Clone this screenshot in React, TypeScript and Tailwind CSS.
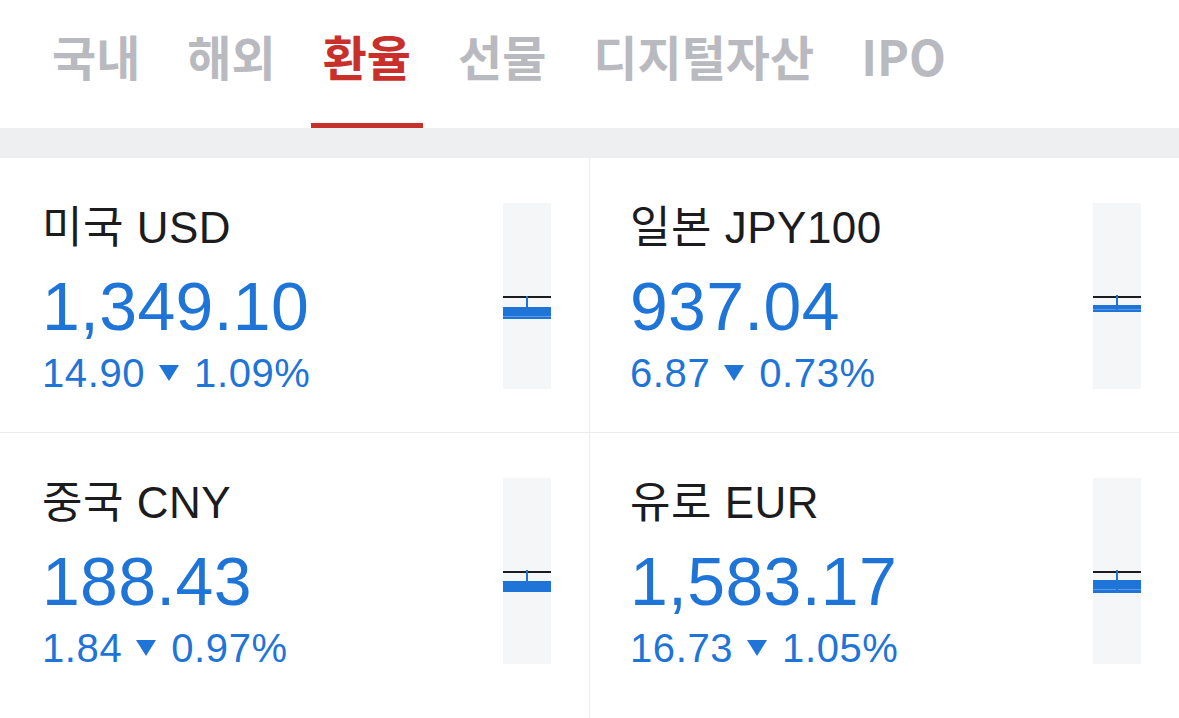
import React from 'react';

type Rate = {
  name: string;
  price: string;
  change: string;
  percent: string;
  candle: { tickTop: number; tickBottom: number; bodyTop: number; bodyBottom: number; inner?: number };
};

const tabs = ['국내', '해외', '환율', '선물', '디지털자산', 'IPO'];

const rates: Rate[] = [
  { name: '미국 USD', price: '1,349.10', change: '14.90', percent: '1.09%', candle: { tickTop: 93, tickBottom: 104, bodyTop: 104, bodyBottom: 116, inner: 113 } },
  { name: '일본 JPY100', price: '937.04', change: '6.87', percent: '0.73%', candle: { tickTop: 92, tickBottom: 108, bodyTop: 102, bodyBottom: 109, inner: 106 } },
  { name: '중국 CNY', price: '188.43', change: '1.84', percent: '0.97%', candle: { tickTop: 92, tickBottom: 105, bodyTop: 103, bodyBottom: 114 } },
  { name: '유로 EUR', price: '1,583.17', change: '16.73', percent: '1.05%', candle: { tickTop: 92, tickBottom: 115, bodyTop: 102, bodyBottom: 115, inner: 111 } },
];

function MiniCandle({ candle }: { candle: Rate['candle'] }) {
  return (
    <svg width="48" height="186" viewBox="0 0 48 186" className="shrink-0">
      <rect x="0" y="0" width="48" height="186" fill="#f5f6f8" />
      <rect x="0" y={candle.bodyTop} width="48" height={candle.bodyBottom - candle.bodyTop} fill="#1f74d8" />
      {candle.inner && <rect x="0" y={candle.inner} width="48" height="1" fill="#5a9ae6" />}
      <rect x="0" y="93" width="48" height="2" fill="#1c1c1e" />
      <rect x="23" y={candle.tickTop} width="2" height={candle.tickBottom - candle.tickTop} fill="#1f74d8" />
    </svg>
  );
}

function RateCard({ rate, left }: { rate: Rate; left: boolean }) {
  return (
    <div className={`flex justify-between pr-[38px] ${left ? 'pl-[42px]' : 'pl-[40px]'}`}>
      <div className="flex flex-col pt-[45px] font-['Liberation_Sans','Noto_Sans_CJK_KR',sans-serif]">
        <div className="text-[44px] leading-[50px] tracking-[0.5px] text-[#1c1c1e]">{rate.name}</div>
        <div className="mt-[17px] text-[68px] leading-[72px] tracking-[0.3px] text-[#1f74d8]">{rate.price}</div>
        <div className="mt-[8px] flex items-center text-[40px] leading-[46px] tracking-[0.6px] text-[#1f74d8]">
          <span>{rate.change}</span>
          <svg width="20" height="16" viewBox="0 0 20 16" className="ml-[14px] mr-[15px]">
            <polygon points="0,0 20,0 10,16" fill="#1f74d8" />
          </svg>
          <span>{rate.percent}</span>
        </div>
      </div>
      <div className="pt-[45px]">
        <MiniCandle candle={rate.candle} />
      </div>
    </div>
  );
}

export default function App() {
  return (
    <div className="w-[1179px] h-[718px] bg-white overflow-hidden">
      <div className="flex h-[128px] items-stretch pl-[40px] gap-[23px] font-['Noto_Sans_CJK_KR',sans-serif]">
        {tabs.map(tab => {
          const active = tab === '환율';
          return (
            <div key={tab} className="relative flex items-center px-[12px] pb-[19px]">
              <span className={`text-[48px] font-bold ${active ? 'text-[#c8302c]' : 'text-[#b9babf]'}`}>{tab}</span>
              {active && <div className="absolute bottom-0 left-0 right-0 h-[5px] bg-[#c8302c]" />}
            </div>
          );
        })}
      </div>
      <div className="h-[30px] bg-[#eeeff1]" />
      <div className="grid grid-cols-[589px_1px_589px]">
        <div className="h-[274px]">
          <RateCard rate={rates[0]} left />
        </div>
        <div className="bg-[#ececee]" />
        <div className="h-[274px]">
          <RateCard rate={rates[1]} left={false} />
        </div>
        <div className="col-span-3 h-[1px] bg-[#ececee]" />
        <div className="h-[285px]">
          <RateCard rate={rates[2]} left />
        </div>
        <div className="bg-[#ececee]" />
        <div className="h-[285px]">
          <RateCard rate={rates[3]} left={false} />
        </div>
      </div>
    </div>
  );
}
